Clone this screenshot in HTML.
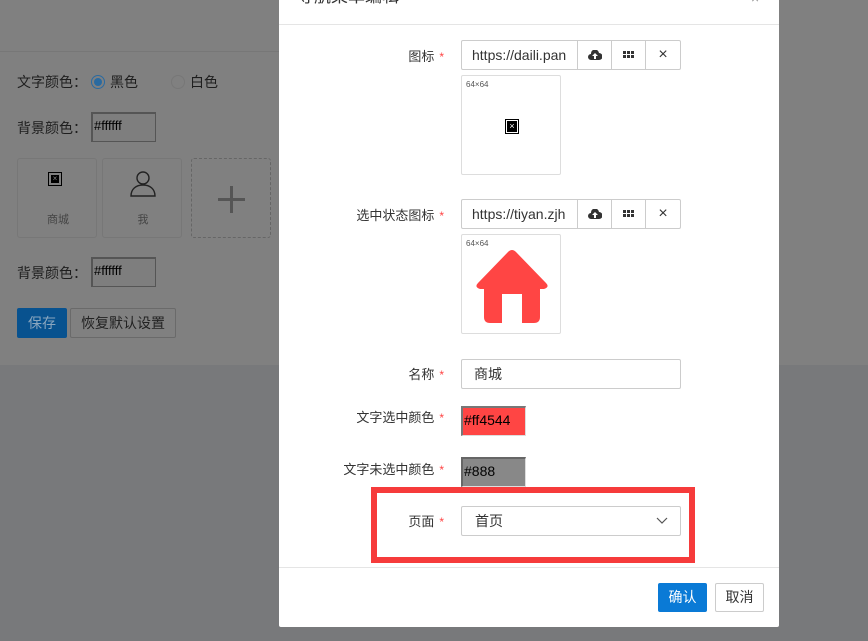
<!DOCTYPE html>
<html><head><meta charset="utf-8"><style>
*{box-sizing:border-box;margin:0;padding:0}
body{width:868px;height:641px;overflow:hidden;position:relative;background:#78797b;font-family:"Liberation Sans","Noto Sans CJK SC",sans-serif;font-size:14px;color:#333}
.a{position:absolute}
.bg{left:0;top:0;width:868px;height:365px;background:#808080}
.t{font-size:14px;color:#1e1e1e}
.cin{border:1px solid #555;border-top-width:2px;border-left-width:2px;background:#7e7e7e;color:#000;font-size:13px;padding-left:1px;line-height:24px;height:30px;width:65px}
.card{border:1px solid #777;border-radius:3px;width:80px;height:80px;background:#808080}
.modal{left:279px;top:-10px;width:500px;height:637px;background:#fff;border-radius:2px}
.lbl{text-align:right;width:155px;font-size:13px;color:#333}
.lbl i{color:#f44;font-style:normal;font-size:12px;margin-left:5px}
.inp{border:1px solid #ccc;border-radius:2px;height:30px;background:#fff}
.btn{border-left:1px solid #ccc;width:34px;height:28px;display:flex;align-items:center;justify-content:center}
.prev{border:1px solid #ddd;border-radius:2px;width:100px;height:100px;background:#fff}
.prev span{position:absolute;left:4px;top:4px;font-size:8px;color:#555}
</style></head><body>
<div class="a bg"></div>
<div class="a" style="left:0;top:51px;width:279px;height:1px;background:#777"></div>
<div class="a t" style="left:17px;top:72px">文字颜色：</div>
<div class="a" style="left:91px;top:75px;width:14px;height:14px;border-radius:50%;border:1px solid #2a6aa0;background:#808080"><div style="margin:2px;width:8px;height:8px;border-radius:50%;background:#2a6aa0"></div></div>
<div class="a t" style="left:110px;top:72px">黑色</div>
<div class="a" style="left:171px;top:75px;width:14px;height:14px;border-radius:50%;border:1px solid #777"></div>
<div class="a t" style="left:190px;top:72px">白色</div>
<div class="a t" style="left:17px;top:118px">背景颜色：</div>
<div class="a cin" style="left:91px;top:112px">#ffffff</div>
<div class="a card" style="left:17px;top:158px"><div class="a" style="left:30px;top:13px;width:14px;height:14px;border:1px solid #000;background:#808080"><div style="margin:2px;width:8px;height:8px;background:#000;color:#888;font-size:8px;line-height:8px;text-align:center">×</div></div><div class="a" style="left:0;top:52px;width:80px;text-align:center;font-size:11px;color:#444">商城</div></div>
<div class="a card" style="left:102px;top:158px"><svg class="a" style="left:26px;top:10px" width="28" height="28" viewBox="0 0 28 28" fill="none" stroke="#222" stroke-width="1.4"><circle cx="14" cy="9" r="6"/><path d="M2 27c0-7 5-11 12-11s12 4 12 11z"/></svg><div class="a" style="left:0;top:52px;width:80px;text-align:center;font-size:11px;color:#444">我</div></div>
<div class="a card" style="left:191px;top:158px;border-style:dashed;border-color:#666"><div class="a" style="left:26px;top:39px;width:27px;height:3px;background:#555"></div><div class="a" style="left:38px;top:27px;width:3px;height:27px;background:#555"></div></div>
<div class="a t" style="left:17px;top:263px">背景颜色：</div>
<div class="a cin" style="left:91px;top:257px">#ffffff</div>
<div class="a" style="left:17px;top:308px;width:50px;height:30px;background:#08528f;border-radius:2px;color:#8aa6bf;line-height:30px;text-align:center">保存</div>
<div class="a" style="left:70px;top:308px;width:106px;height:30px;border:1px solid #6a6a6a;border-radius:2px;color:#222;line-height:28px;text-align:center">恢复默认设置</div>

<div class="a modal">
<div class="a" style="left:18px;top:-8px;font-size:17px;color:#333">导航菜单编辑</div>
<div class="a" style="left:472px;top:0px;color:#999;font-size:14px">×</div>
<div class="a" style="left:0;top:34px;width:500px;height:1px;background:#e5e5e5"></div>

<div class="a lbl" style="left:10px;top:56px">图标<i>*</i></div>
<div class="a inp" style="left:182px;top:50px;width:220px;display:flex"><div style="width:116px;padding-left:10px;line-height:28px;overflow:hidden;white-space:nowrap;color:#333">https://daili.pan</div><div class="btn"><svg width="14" height="10" viewBox="0 0 14 10"><path d="M3 10a3 3 0 0 1 0-6 4 4 0 0 1 8-1 3.5 3.5 0 0 1 0 7z" fill="#333"/><path d="M7 3l-3 3h2v3h2V6h2z" fill="#fff"/></svg></div><div class="btn"><svg width="11" height="8"><g fill="#333"><rect x="0" y="0" width="3" height="3"/><rect x="4" y="0" width="3" height="3"/><rect x="8" y="0" width="3" height="3"/><rect x="0" y="4" width="3" height="3"/><rect x="4" y="4" width="3" height="3"/><rect x="8" y="4" width="3" height="3"/></g></svg></div><div class="btn" style="width:35px;font-size:16px">×</div></div>
<div class="a prev" style="left:182px;top:85px"><span>64×64</span><div class="a" style="left:43px;top:43px;width:14px;height:15px;border:1px solid #000"><div style="margin:1px;width:10px;height:11px;background:#000;color:#fff;font-size:9px;line-height:11px;text-align:center">×</div></div></div>

<div class="a lbl" style="left:10px;top:215px">选中状态图标<i>*</i></div>
<div class="a inp" style="left:182px;top:209px;width:220px;display:flex"><div style="width:116px;padding-left:10px;line-height:28px;overflow:hidden;white-space:nowrap;color:#333">https://tiyan.zjh</div><div class="btn"><svg width="14" height="10" viewBox="0 0 14 10"><path d="M3 10a3 3 0 0 1 0-6 4 4 0 0 1 8-1 3.5 3.5 0 0 1 0 7z" fill="#333"/><path d="M7 3l-3 3h2v3h2V6h2z" fill="#fff"/></svg></div><div class="btn"><svg width="11" height="8"><g fill="#333"><rect x="0" y="0" width="3" height="3"/><rect x="4" y="0" width="3" height="3"/><rect x="8" y="0" width="3" height="3"/><rect x="0" y="4" width="3" height="3"/><rect x="4" y="4" width="3" height="3"/><rect x="8" y="4" width="3" height="3"/></g></svg></div><div class="btn" style="width:35px;font-size:16px">×</div></div>
<div class="a prev" style="left:182px;top:244px"><span>64×64</span><svg class="a" style="left:12px;top:14px" width="76" height="76" viewBox="0 0 76 76"><path d="M34 3q4-4 8 0l30 31q4 4-2 6h-4v28q0 6-6 6h-12v-29h-20v29h-12q-6 0-6-6v-28h-4q-6-2-2-6z" fill="#ff4544"/></svg></div>

<div class="a lbl" style="left:10px;top:374px">名称<i>*</i></div>
<div class="a inp" style="left:182px;top:369px;width:220px;padding-left:12px;line-height:28px">商城</div>

<div class="a lbl" style="left:10px;top:417px">文字选中颜色<i>*</i></div>
<div class="a cin" style="left:182px;top:416px;background:#ff4544;border-color:#777 #ddd #ddd #777;font-size:14px;padding-left:1px">#ff4544</div>

<div class="a lbl" style="left:10px;top:469px">文字未选中颜色<i>*</i></div>
<div class="a cin" style="left:182px;top:467px;background:#888;border-color:#666 #ddd #ddd #666;font-size:14px">#888</div>

<div class="a" style="left:92px;top:497px;width:324px;height:76px;border:6px solid #f63b3b"></div>
<div class="a lbl" style="left:10px;top:521px">页面<i>*</i></div>
<div class="a inp" style="left:182px;top:516px;width:220px;padding-left:13px;line-height:28px">首页<svg class="a" style="right:12px;top:10px" width="12" height="8"><path d="M1 1l5 5 5-5" fill="none" stroke="#555" stroke-width="1.2"/></svg></div>

<div class="a" style="left:0;top:577px;width:500px;height:1px;background:#e5e5e5"></div>
<div class="a" style="left:379px;top:593px;width:49px;height:29px;background:#0a7ad6;border-radius:2px;color:#fff;line-height:29px;text-align:center">确认</div>
<div class="a" style="left:436px;top:593px;width:49px;height:29px;border:1px solid #ccc;border-radius:2px;color:#333;line-height:27px;text-align:center">取消</div>
</div>
</body></html>
